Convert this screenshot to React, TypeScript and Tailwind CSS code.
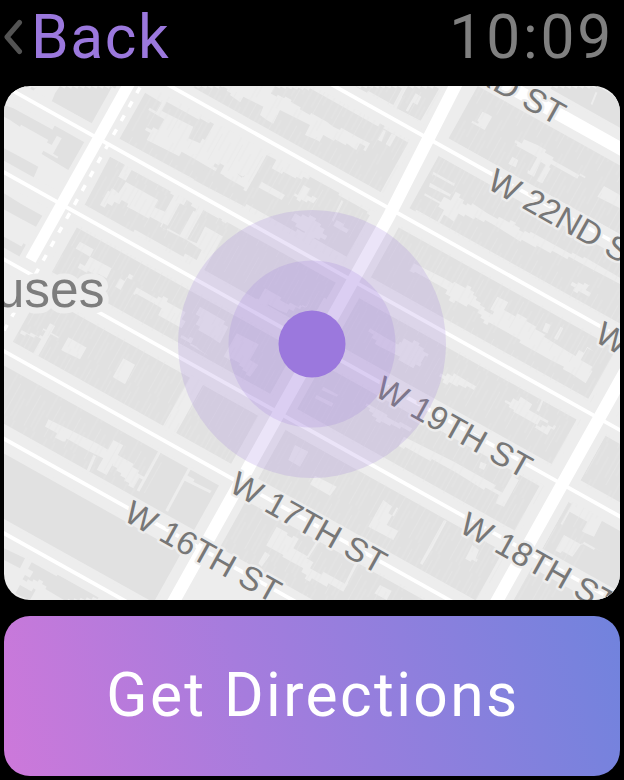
import React from "react";

const PALE = "#ededed";
const BUILT = "#e1e1e1";

// City grid, measured in a frame rotated to follow the streets.
const streets = [-88, -8, 73, 148.4, 224.4, 304.6, 381, 463.5];

const blocks: [number, number, number, number][] = [
  [458, -160, 300, 62],
  [458, -78, 250, 58],
  [458, 4, 250, 57],
  [458, 85, 250, 51],
  [458, 161, 250, 51],
  [458, 236, 250, 56],
  [458, 317, 250, 60],
  [741, 85, 120, 51],
  [741, 161, 120, 55],
  [741, 236, 120, 56],
  [178, 161, 250, 51],
  [178, 237, 172, 55],
  [365, 237, 63, 55],
  [100, 317, 328, 51],
  [100, 394, 328, 57],
  [310, 86, 118, 50],
];

type Sheet = { x: number; y: number; built: string[]; yards: string[] };

// Surveyed in sheets, three units to the pixel.
const sheets: Sheet[] = [
  {
    x: 0,
    y: 80,
    built: [
      "180,18 350,18 275,130 155,65 165,40",
      "80,20 110,20 100,32",
      "12,75 40,85 150,145 165,135 255,182 205,270 125,222 130,212 175,230 185,175 155,195 145,180 60,140 30,120 12,100",
      "12,205 50,225 115,260 100,295 75,285 60,272 12,250",
      "12,340 60,370 130,402 108,440 60,415 12,375",
      "12,470 70,490 55,535 12,515",
      "430,35 480,65 470,95 445,90 480,110 475,150 435,150 440,180 530,225 545,215 580,235 640,270 660,250 660,340 365,180",
      "500,65 630,130 600,190 565,175 580,140 490,95",
      "565,18 660,18 660,68",
      "330,230 370,250 355,290 375,310 355,340 345,330 330,335 300,375 365,360 380,380 400,390 450,410 480,440 560,480 605,510 590,540 550,530 250,382",
      "395,270 495,325 510,340 495,395 470,385 475,360 385,310",
      "540,370 560,360 585,395 540,465 500,450 470,435 510,425",
      "610,390 660,410 660,430 620,430 590,490 555,475",
    ],
    yards: ["240,485 285,500 270,530 230,500", "610,180 650,200 630,250 600,230"],
  },
  {
    x: 200,
    y: 80,
    built: [
      "0,20 40,30 70,20 90,45 125,70 130,50 190,80 180,105 200,120 215,140 240,90 330,135 315,165 350,180 370,165 440,190 460,205 480,190 490,210 455,300 400,270 0,62",
      "225,18 330,25 540,130 550,145 620,185 540,340 460,300 510,190 480,175 420,150 400,140 380,125 330,105 275,60 230,50",
      "450,18 610,18 580,75 500,40",
      "620,25 660,45 660,120 590,85",
      "0,115 30,125 15,180 0,185",
      "45,250 70,255 60,270",
      "110,280 135,285 125,293",
      "200,225 220,235 215,265 250,275 290,290 330,290 500,400 440,530 135,380 0,310 0,265 30,265 130,330",
      "15,395 150,450 420,600 400,660 340,650 290,615 180,580 80,540 50,510 70,470 0,440",
      "660,330 620,385 660,410",
    ],
    yards: [
      "185,305 255,345 245,360 180,325",
      "285,400 330,405 360,440 375,480 340,480 290,430",
      "425,360 430,365 400,425 395,420",
      "285,340 310,315 320,345 355,350 340,370 300,365",
      "410,420 435,425 430,440 460,455 440,460 405,440",
      "550,150 558,152 545,185 538,182",
      "575,160 583,164 570,200 563,196",
    ],
  },
  {
    x: 404,
    y: 80,
    built: ["12,18 110,18 50,122 0,95", "425,18 580,18 648,58 648,143"],
    yards: [
      "235,95 252,103 242,150 200,133 205,122 225,126",
      "335,180 360,178 400,195 445,240 490,265 545,290 520,296 435,262 415,310 405,306 425,255 410,245 390,290 370,280 372,270 400,232 340,192",
      "600,318 648,345 648,385 580,350",
      "88,275 155,303 150,318 84,290",
      "78,308 143,337 138,350 75,320",
      "63,340 120,365 115,376 58,350",
      "120,350 155,335 175,370 205,370 250,400 320,420 345,450 380,455 470,505 540,530 660,600 660,618 540,555 440,520 350,485 270,435 180,410 150,425 130,410 100,440 90,430 120,390",
      "325,230 345,235 335,262 320,255",
      "35,40 52,50 40,75 12,95 20,65",
      "575,35 580,38 565,75 560,72",
    ],
  },
  {
    x: 0,
    y: 250,
    built: [],
    yards: [
      "240,40 270,20 335,55 320,85 230,60",
      "410,112 460,140 490,138 500,155 545,180 545,235 470,205 485,175 460,160 405,135",
      "360,85 400,78 375,95 362,120 356,116",
      "370,325 402,350 375,403 333,378",
      "205,262 255,290 240,328 193,305",
      "150,220 160,225 115,318 105,314",
      "65,240 120,255 130,270 75,258",
      "130,235 180,255 175,265 125,248",
      "145,508 200,535 290,580 380,630 430,690 400,715 340,640 260,600 190,560 140,520",
      "190,545 210,560 195,575 175,565",
      "545,255 570,260 570,285 630,320 600,300 590,290",
    ],
  },
  {
    x: 200,
    y: 250,
    built: [],
    yards: [
      "195,115 240,150 300,165 335,140 320,172 260,190 235,180 200,170 170,145",
      "0,170 60,205 80,240 60,280 30,260 0,230",
      "110,250 170,280 150,330 175,345 150,380 120,340 90,330",
      "510,235 560,265 600,275 640,315 660,350 640,355 600,320 540,290",
      "370,410 420,430 410,440 365,420",
      "350,435 400,460 395,470 345,445",
      "500,460 560,500 640,530 630,545 540,520",
    ],
  },
  {
    x: 404,
    y: 250,
    built: [],
    yards: [
      "30,40 120,85 150,95 190,105 215,150 240,180 270,185 280,140 300,150 300,180 340,190 420,260 500,310 550,290 570,305 530,330 560,360 545,400 500,370 480,350 440,330 350,270 250,225 225,180 150,160 130,120 30,70",
      "425,218 440,225 430,250 415,243",
      "470,230 478,235 460,270 450,265",
      "505,95 560,100 545,120 555,140 520,130",
      "110,370 150,370 200,400 210,420 160,410 130,405",
      "305,450 350,440 380,460 375,480 430,520 400,525 330,480",
      "415,445 420,448 405,485 398,482",
      "0,265 30,270 70,320 50,340 0,290",
    ],
  },
  {
    x: 0,
    y: 425,
    built: [
      "12,370 75,400 60,430 12,405",
      "95,412 330,520 200,530 150,500 130,470 80,470 75,450 100,440",
      "60,480 100,490 90,525 55,510",
    ],
    yards: [
      "478,72 486,76 418,200 410,196",
      "568,122 576,126 504,260 496,256",
      "560,150 580,170 640,200 630,205 560,170",
      "340,45 350,50 320,150 310,145",
      "280,90 288,94 268,140 260,136",
      "180,10 210,20 190,50 160,35",
    ],
  },
  {
    x: 200,
    y: 425,
    built: [],
    yards: [
      "285,60 325,80 300,125 265,105",
      "345,152 410,185 390,212 330,178",
      "550,225 570,240 565,265 595,250 560,300 600,320 580,345 505,305",
      "230,305 260,330 300,335 280,370 320,400 330,430 370,440 440,470 430,500 380,485 330,470 310,430 250,390 205,365",
      "195,380 210,390 185,425 175,415",
      "480,385 488,389 440,480 434,476",
      "355,340 361,343 325,400 320,396",
      "540,480 580,500 560,525 520,510",
    ],
  },
  {
    x: 404,
    y: 425,
    built: [],
    yards: [
      "0,35 90,80 150,110 230,155 270,190 290,200 325,150 335,160 300,245 275,235 285,210 240,195 160,145 0,72",
      "230,110 248,118 240,135 225,128",
      "120,285 128,289 85,370 55,420 48,415",
      "205,360 225,375 215,400 235,412 200,410 190,390",
      "510,225 600,275 570,335 545,325 550,290 505,265 475,300",
      "480,330 540,350 600,385 570,375 530,360 505,395 470,385",
      "380,0 450,0 450,15 430,30",
    ],
  },
];

const COS = Math.cos((29.2 * Math.PI) / 180);
const SIN = Math.sin((29.2 * Math.PI) / 180);

// Turns every slanted edge into stairs that run with the grid, as house walls do.
function walls(points: string): string {
  const grid = points.split(" ").map((p) => {
    const [x, y] = p.split(",").map(Number);
    return [x * COS + y * SIN, y * COS - x * SIN];
  });
  const out: string[] = [];
  const put = (u: number, v: number) =>
    out.push(`${(u * COS - v * SIN).toFixed(1)},${(u * SIN + v * COS).toFixed(1)}`);
  grid.forEach(([u0, v0], i) => {
    const [u1, v1] = grid[(i + 1) % grid.length];
    const du = u1 - u0;
    const dv = v1 - v0;
    put(u0, v0);
    if (Math.abs(dv) < 5 || Math.abs(du) < 5) return;
    const n = Math.max(1, Math.round(Math.min(Math.abs(du) / 16, Math.abs(dv) / 8)));
    for (let k = 0; k < n; k++) {
      const u = u0 + (du * (k + 1)) / n;
      put(u, v0 + (dv * k) / n);
      put(u, v0 + (dv * (k + 1)) / n);
    }
  });
  return out.join(" ");
}

const labels: [string, number, number][] = [
  ["W 23RD ST", 403, 40],
  ["W 22ND ST", 485.5, 187.5],
  ["W 21ST ST", 593, 340.5],
  ["W 19TH ST", 373, 395],
  ["W 18TH ST", 457.5, 531],
  ["W 17TH ST", 227.5, 490.5],
  ["W 16TH ST", 122, 519.5],
];

function StreetMap() {
  return (
    <svg viewBox="4 86 616 514" className="block h-[514px] w-[616px]" aria-label="Map">
      <defs>
        <pattern id="lots" width="23" height="90" patternUnits="userSpaceOnUse">
          <path
            d="M2 0v32M6.5 8v30M11 0v25M14 40v32M18 12v38M21.5 55v35M5 58v30M9 66v24"
            stroke="#e8e8e8"
            strokeWidth="0.6"
          />
        </pattern>
      </defs>
      <rect x="0" y="80" width="630" height="530" fill={PALE} />
      <g transform="rotate(29.2)">
        {blocks.map(([x, y, w, h]) => (
          <rect key={`${x}:${y}`} x={x} y={y} width={w} height={h} fill={BUILT} />
        ))}
      </g>
      {sheets.map((s) => (
        <g key={`b${s.x}:${s.y}`} transform={`translate(${s.x} ${s.y}) scale(0.33333)`} fill={BUILT}>
          {s.built.map((p) => (
            <polygon key={p} points={walls(p)} />
          ))}
        </g>
      ))}
      {sheets.map((s) => (
        <g key={`y${s.x}:${s.y}`} transform={`translate(${s.x} ${s.y}) scale(0.33333)`} fill={PALE}>
          {s.yards.map((p) => (
            <polygon key={p} points={walls(p)} />
          ))}
        </g>
      ))}
      <g transform="rotate(29.2)">
        <rect x="178" y="-160" width="600" height="452" fill="url(#lots)" />
        <rect x="178" y="317" width="190" height="51" fill="url(#lots)" />
        <rect x="458" y="300" width="300" height="80" fill="url(#lots)" />
        {streets.map((v) => (
          <path key={`c${v}`} d={`M-60 ${v}H900`} stroke={PALE} strokeWidth="20" />
        ))}
        <path d="M158 -120V330M445 -220V560M727 -220V480" stroke={PALE} strokeWidth="28" />
        <path d="M380 -173H900" stroke={PALE} strokeWidth="30" />
        {streets.map((v) => (
          <path key={`r${v}`} d={`M-60 ${v}H900`} stroke="#fff" strokeWidth="3.8" />
        ))}
        <path d="M380 -173H900" stroke="#fff" strokeWidth="13" />
        <path d="M153.500 -120V212" stroke="#fff" strokeWidth="11.500" />
        <path d="M164.800 -120V340" stroke="#fff" strokeWidth="3.500" strokeDasharray="6.500 9.500" />
        <path d="M438 -180L445 0V560M727 -220V480" fill="none" stroke="#fff" strokeWidth="12.500" />
      </g>
      <g
        fontFamily="'Liberation Sans', Arial, sans-serif"
        fill="#7d7d7d"
        stroke="#ededed"
        strokeLinejoin="round"
        paintOrder="stroke"
      >
        <text x="104.500" y="307" fontSize="51.500" textAnchor="end" strokeWidth="12">
          uses
        </text>
        {labels.map(([name, x, y]) => (
          <text
            key={name}
            transform={`translate(${x} ${y}) rotate(29.2)`}
            fontSize="33.1"
            strokeWidth="5"
            fill="#777"
          >
            {name}
          </text>
        ))}
      </g>
      <g fill="#9b78dd">
        <circle cx="312" cy="344" r="134" opacity="0.2" />
        <circle cx="312" cy="344" r="83.500" opacity="0.2" />
        <circle cx="312" cy="344" r="33.500" />
      </g>
    </svg>
  );
}

export default function App() {
  return (
    <div className="flex h-[780px] w-[624px] flex-col overflow-hidden bg-black px-1 pb-1 font-['Roboto',sans-serif]">
      <header className="flex h-[86px] shrink-0 items-start justify-between text-[60.5px] leading-[75px]">
        <button className="flex items-start text-[#9b78dd]">
          <svg viewBox="0 0 20 36" className="mt-[19px] h-9 w-5" fill="none">
            <path
              d="M15.500 3.500L3 18L15.500 32.500"
              stroke="#535353"
              strokeWidth="5"
              strokeLinecap="round"
              strokeLinejoin="round"
            />
          </svg>
          <span className="ml-[7px] tracking-[1.6px]">Back</span>
        </button>
        <time className="mr-[6px] tracking-[2.8px] text-[#808080]">10:09</time>
      </header>
      <main className="h-[514px] shrink-0 overflow-hidden rounded-[26px]">
        <StreetMap />
      </main>
      <button className="mt-4 flex h-[160px] shrink-0 items-center justify-center rounded-[26px] bg-[linear-gradient(75deg,#cd78da_0%,#a67cdd_40%,#7183dd_100%)] pl-[2px] text-[60.5px] leading-none tracking-[2.4px] text-white">
        Get Directions
      </button>
    </div>
  );
}
